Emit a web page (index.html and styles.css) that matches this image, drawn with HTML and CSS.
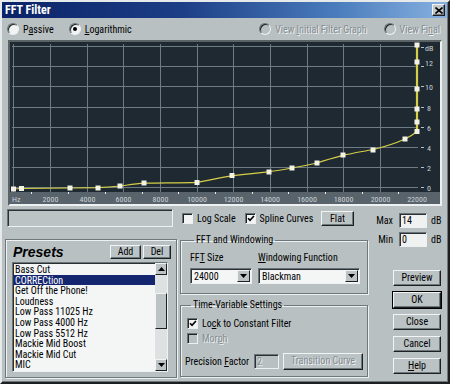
FILE: index.html
```html
<!DOCTYPE html>
<html>
<head>
<meta charset="utf-8">
<link rel="stylesheet" href="styles.css">
</head>
<body>
<div class="win">
  <div class="titlebar">
    <span class="title">FFT Filter</span>
    <span class="close"><svg width="8" height="7" viewBox="0 0 8 7"><path d="M0.5 0.5 L7.5 6.5 M7.5 0.5 L0.5 6.5" stroke="#000" stroke-width="1.6"/></svg></span>
  </div>

  <div class="radios">
    <label class="opt"><span class="radio"></span><span>P<u>a</u>ssive</span></label>
    <label class="opt opt-log"><span class="radio on"></span><span><u>L</u>ogarithmic</span></label>
    <label class="opt dis opt-init"><span class="radio off"></span><span>View <u>I</u>nitial Filter Graph</span></label>
    <label class="opt dis opt-final"><span class="radio off"></span><span>View Fi<u>n</u>al</span></label>
  </div>

  <div class="graph">
    <svg class="plot" width="430" height="162" viewBox="10 42 430 162">
      <rect x="10" y="42" width="430" height="150" fill="#1f2931"/>
      <rect x="10" y="192" width="430" height="12" fill="#58636b"/>
      <g stroke="#6e7a84" stroke-width="1">
        <path d="M12 46.5H418M12 66.5H418M12 86.5H418M12 107.5H418M12 127.5H418M12 147.5H418M12 167.5H418M12 187.5H418"/>
        <path d="M13.5 44V192M50.5 44V192M87.5 44V192M123.5 44V192M160.5 44V192M197.5 44V192M233.5 44V192M270.5 44V192M307.5 44V192M343.5 44V192M380.5 44V192"/>
        <path d="M421 47.5H424M421 66.5H424M421 86.5H424M421 107.5H424M421 127.5H424M421 147.5H424M421 167.5H424M421 187.5H424" stroke="#b8c0c6"/>
      </g>
      <g fill="#e8ecee">
        <rect x="31" y="192" width="1" height="2"/><rect x="68" y="192" width="1" height="2"/><rect x="105" y="192" width="1" height="2"/><rect x="142" y="192" width="1" height="2"/><rect x="178" y="192" width="1" height="2"/><rect x="215" y="192" width="1" height="2"/><rect x="252" y="192" width="1" height="2"/><rect x="288" y="192" width="1" height="2"/><rect x="325" y="192" width="1" height="2"/><rect x="362" y="192" width="1" height="2"/><rect x="398" y="192" width="1" height="2"/>
      </g>
      <path d="M13.5 189 L21.5 188.5 C45 188.3 60 188.1 70 188 L98 187.6 C108 187 114 186.5 120 186 C128 185 136 183.8 144 183.2 C165 182.8 185 182.8 197 182.3 C210 180 221 177.5 232 175.8 C245 174 257 173 269 171.8 C277 170.5 285 169.3 292 168 C300 166.5 309 164.8 317 163 C326 160 335 157.5 343 155.4 C353 153 363 151.5 373 149.5 C384 147 395 143.5 405 139 C410 136.5 414 134 417 131.5" fill="none" stroke="#d6cf46" stroke-width="1.2"/>
      <path d="M417 132V45" stroke="#d6cf46" stroke-width="2.2"/>
      <g fill="#f2f2e6">
        <rect x="11" y="186.5" width="5" height="5"/>
        <rect x="19" y="186" width="5" height="5"/>
        <rect x="67.5" y="185.5" width="5" height="5"/>
        <rect x="95.5" y="185.5" width="5" height="5"/>
        <rect x="117.5" y="183.5" width="5" height="5"/>
        <rect x="141.5" y="180.5" width="5" height="5"/>
        <rect x="194.5" y="180" width="5" height="5"/>
        <rect x="229.5" y="173" width="5" height="5"/>
        <rect x="266.5" y="169.5" width="5" height="5"/>
        <rect x="289.5" y="165.5" width="5" height="5"/>
        <rect x="314.5" y="160.5" width="5" height="5"/>
        <rect x="340.5" y="152.5" width="5" height="5"/>
        <rect x="370.5" y="147.5" width="5" height="5"/>
        <rect x="402.5" y="136.5" width="5" height="5"/>
        <rect x="414.5" y="129" width="5" height="5"/>
        <rect x="414.5" y="119.5" width="5" height="5"/>
        <rect x="414.5" y="106.5" width="5" height="5"/>
        <rect x="414.5" y="86.5" width="5" height="5"/>
        <rect x="414.5" y="59.5" width="5" height="5"/>
        <rect x="414.5" y="42.5" width="5" height="5"/>
      </g>
      <g class="ax" fill="#c9d1d7">
        <text x="12" y="201.5">Hz</text>
        <g text-anchor="middle">
          <text x="50.5" y="201.5">2000</text>
          <text x="87.5" y="201.5">4000</text>
          <text x="123.5" y="201.5">6000</text>
          <text x="160.5" y="201.5">8000</text>
          <text x="197" y="201.5">10000</text>
          <text x="233.5" y="201.5">12000</text>
          <text x="270" y="201.5">14000</text>
          <text x="307" y="201.5">16000</text>
          <text x="343.5" y="201.5">18000</text>
          <text x="380.5" y="201.5">20000</text>
          <text x="417" y="201.5">22000</text>
        </g>
        <text x="425" y="50.5">dB</text>
        <text x="425" y="65.5">12</text>
        <text x="425" y="89.5">10</text>
        <text x="427" y="110.5">8</text>
        <text x="427" y="130.5">6</text>
        <text x="427" y="150.5">4</text>
        <text x="427" y="170.5">2</text>
        <text x="427" y="190.5">0</text>
      </g>
    </svg>
  </div>

  <div class="lower">
    <div class="col1">
      <div class="status"></div>
      <div class="presets">
        <div class="presets-head">
          <span class="presets-title">Presets</span>
          <button class="btn btn-add">Add</button>
          <button class="btn btn-del">Del</button>
        </div>
        <div class="listbox">
          <ul class="items">
            <li>Bass Cut</li>
            <li class="sel">CORRECtion</li>
            <li>Get Off the Phone!</li>
            <li>Loudness</li>
            <li>Low Pass 11025 Hz</li>
            <li>Low Pass 4000 Hz</li>
            <li>Low Pass 5512 Hz</li>
            <li>Mackie Mid Boost</li>
            <li>Mackie Mid Cut</li>
            <li>MIC</li>
            <li>Noise Reduction</li>
          </ul>
          <div class="vscroll">
            <span class="sbtn"><svg width="7" height="4" viewBox="0 0 7 4"><path d="M0 4L3.5 0L7 4Z" fill="#000"/></svg></span>
            <span class="track"><span class="thumb"></span></span>
            <span class="sbtn"><svg width="7" height="4" viewBox="0 0 7 4"><path d="M0 0L3.5 4L7 0Z" fill="#000"/></svg></span>
          </div>
        </div>
      </div>
    </div>

    <div class="col2">
      <div class="checks">
        <label class="ck"><span class="box"></span><span>Log Scale</span></label>
        <label class="ck ck-spline"><span class="box"><svg width="9" height="9" viewBox="0 0 9 9"><path d="M1.2 4.2L3.4 6.6L7.8 1.6" fill="none" stroke="#000" stroke-width="1.8"/></svg></span><span>Spline Curves</span></label>
        <button class="btn btn-flat">Flat</button>
      </div>

      <fieldset class="group fft">
        <legend>FFT and Windowing</legend>
        <div class="fft-grid">
          <span class="lbl">FF<u>T</u> Size</span>
          <span class="lbl"><u>W</u>indowing Function</span>
          <div class="select"><span class="val">24000</span><span class="drop"><svg width="7" height="4" viewBox="0 0 7 4"><path d="M0 0L3.5 4L7 0Z" fill="#000"/></svg></span></div>
          <div class="select"><span class="val">Blackman</span><span class="drop"><svg width="7" height="4" viewBox="0 0 7 4"><path d="M0 0L3.5 4L7 0Z" fill="#000"/></svg></span></div>
        </div>
      </fieldset>

      <fieldset class="group tv">
        <legend>Time-Variable Settings</legend>
        <label class="ck ck-row"><span class="box"><svg width="9" height="9" viewBox="0 0 9 9"><path d="M1.2 4.2L3.4 6.6L7.8 1.6" fill="none" stroke="#000" stroke-width="1.8"/></svg></span><span>Lo<u>c</u>k to Constant Filter</span></label>
        <label class="ck ck-row dis"><span class="box off"></span><span>Mor<u>p</u>h</span></label>
        <div class="prec">
          <span class="lbl">Precision <u>F</u>actor</span>
          <span class="field off">2</span>
          <button class="btn btn-trans dis">Transition Curve</button>
        </div>
      </fieldset>
    </div>

    <div class="col3">
      <div class="range"><span class="rl">Max</span><span class="field">14</span><span class="unit">dB</span></div>
      <div class="range"><span class="rl">Min</span><span class="field">0</span><span class="unit">dB</span></div>
      <div class="actions">
        <button class="btn act">Preview</button>
        <button class="btn act def">OK</button>
        <button class="btn act">Close</button>
        <button class="btn act">Cancel</button>
        <button class="btn act"><u>H</u>elp</button>
      </div>
    </div>
  </div>
</div>
</body>
</html>
```

FILE: styles.css
```css
* { box-sizing: border-box; }
html, body { margin: 0; padding: 0; }
body {
  width: 450px;
  height: 384px;
  overflow: hidden;
  font-family: "Roboto Condensed", "DejaVu Sans Condensed", "Liberation Sans Narrow", "Arial Narrow", "Liberation Sans", sans-serif;
  font-stretch: condensed;
  font-size: 10px;
  color: #000;
  background: #b9c0c2;
}
u { text-decoration: underline; text-underline-offset: 1px; }

.win {
  width: 450px;
  height: 384px;
  background: #b9c0c2;
  border: 2px solid;
  border-color: #e6eaeb #1c2023 #1c2023 #e6eaeb;
  box-shadow: inset -1px -1px 0 #6e777b;
  display: flex;
  flex-direction: column;
}

.titlebar {
  height: 16px;
  margin: 0 1px 0 0;
  background: linear-gradient(90deg, #0b2266 0%, #1c3e86 40%, #4a7cbc 75%, #86b0e0 100%);
  display: flex;
  align-items: center;
  justify-content: space-between;
  padding: 0 2px 0 3px;
}
.title {
  color: #fff;
  font-weight: bold;
  font-size: 12px;
}
.close {
  width: 13px;
  height: 12px;
  background: #c4cacc;
  border: 1px solid;
  border-color: #f2f4f4 #1c2023 #1c2023 #f2f4f4;
  box-shadow: inset -1px -1px 0 #6e777b;
  display: flex;
  align-items: center;
  justify-content: center;
}

.radios {
  height: 22px;
  display: flex;
  align-items: center;
  padding-left: 5px;
  white-space: nowrap;
}
.opt { display: flex; align-items: center; gap: 4px; }
.opt-log { margin-left: 15px; }
.opt-init { margin-left: auto; }
.opt-final { margin-left: 17px; margin-right: 8px; }
.radio {
  width: 12px;
  height: 12px;
  border-radius: 50%;
  background: #f2f4f4;
  border: 1px solid;
  border-color: #6a7377 #eef1f1 #eef1f1 #6a7377;
  box-shadow: inset 1px 1px 0 #1e2326;
  display: flex;
  align-items: center;
  justify-content: center;
  flex: none;
}
.radio.on::after {
  content: "";
  width: 4px;
  height: 4px;
  border-radius: 50%;
  background: #000;
}
.radio.off { background: #b9c0c2; }
.dis { color: #858d91; text-shadow: 1px 1px 0 #eef2f2; }

.graph {
  margin-left: 6px;
  width: 434px;
  height: 166px;
  border: 2px solid;
  border-color: #5a6266 #eef1f1 #eef1f1 #5a6266;
  box-shadow: inset 1px 1px 0 #1a1e20;
}
.plot { display: block; }
.ax text { font-size: 8px; }

.lower {
  flex: 1;
  display: grid;
  grid-template-columns: 173px 188px 1fr;
  padding-left: 3px;
  gap: 0 2px;
}

/* column 1 */
.col1 { display: flex; flex-direction: column; }
.status {
  margin: 3px 0 0 2px;
  width: 166px;
  height: 18px;
  border: 1px solid;
  border-color: #6a7377 #eef1f1 #eef1f1 #6a7377;
  box-shadow: inset 1px 1px 0 #2a3033;
  background: #bcc3c5;
}
.presets {
  margin-top: 12px;
  width: 172px;
  height: 139px;
  border: 1px solid #6e777b;
  box-shadow: inset 1px 1px 0 #eef1f1, 1px 1px 0 #eef1f1;
  padding: 4px 0 0 6px;
}
.presets-head { display: flex; align-items: center; height: 16px; }
.presets-title {
  font-family: "Liberation Sans", Arial, sans-serif;
  font-stretch: normal;
  font-weight: bold;
  font-style: italic;
  font-size: 14px;
  margin-left: 1px;
}
.btn {
  font-family: inherit;
  font-stretch: inherit;
  font-size: 10px;
  color: #000;
  background: #bcc3c5;
  border: 1px solid;
  border-color: #f2f4f4 #1c2023 #1c2023 #f2f4f4;
  box-shadow: inset -1px -1px 0 #6e777b;
  padding: 0;
  display: flex;
  align-items: center;
  justify-content: center;
  line-height: 1;
  white-space: nowrap;
}
.btn.dis { color: #858d91; text-shadow: 1px 1px 0 #eef2f2; }
.btn-add { margin-left: auto; width: 31px; height: 14px; }
.btn-del { margin-left: 2px; margin-right: 5px; width: 28px; height: 14px; }

.listbox {
  margin-top: 2px;
  width: 156px;
  height: 110px;
  display: flex;
  background: #f4f6f6;
  border: 1px solid;
  border-color: #6a7377 #eef1f1 #eef1f1 #6a7377;
  box-shadow: inset 1px 1px 0 #2a3033;
  overflow: hidden;
}
.items {
  list-style: none;
  margin: 0;
  padding: 1px 0 0 1px;
  flex: 1;
  overflow: hidden;
}
.items li {
  height: 10.6px;
  line-height: 11px;
  padding-left: 1px;
  white-space: nowrap;
}
.items li.sel { background: #142670; color: #fff; }
.vscroll {
  width: 12px;
  display: flex;
  flex-direction: column;
}
.sbtn {
  height: 12px;
  background: #bcc3c5;
  border: 1px solid;
  border-color: #f2f4f4 #1c2023 #1c2023 #f2f4f4;
  display: flex;
  align-items: center;
  justify-content: center;
}
.track {
  flex: 1;
  background: #dde1e2;
  padding-top: 18px;
}
.thumb {
  display: block;
  height: 36px;
  background: #bcc3c5;
  border: 1px solid;
  border-color: #f2f4f4 #1c2023 #1c2023 #f2f4f4;
}

/* column 2 */
.col2 { display: flex; flex-direction: column; }
.checks {
  margin-top: 5px;
  height: 15px;
  display: flex;
  align-items: center;
  padding-left: 2px;
  white-space: nowrap;
}
.ck { display: flex; align-items: center; gap: 4px; white-space: nowrap; }
.ck-spline { margin-left: 9px; }
.box {
  width: 11px;
  height: 11px;
  background: #f2f4f4;
  border: 1px solid;
  border-color: #6a7377 #eef1f1 #eef1f1 #6a7377;
  box-shadow: inset 1px 1px 0 #1e2326;
  display: flex;
  align-items: center;
  justify-content: center;
  flex: none;
}
.box svg { margin: 0 0 0 1px; }
.box.off { background: #b9c0c2; }
.btn-flat { margin-left: auto; margin-right: 14px; width: 33px; height: 15px; }

.group {
  margin: 0;
  width: 188px;
  border: 1px solid #6e777b;
  box-shadow: inset 1px 1px 0 #eef1f1, 1px 1px 0 #eef1f1;
  padding: 0;
  min-width: 0;
}
.group legend {
  padding: 0 2px;
  margin-left: 4px;
  line-height: 12px;
  height: 12px;
  white-space: nowrap;
}
.fft { margin-top: 8px; height: 60px; padding: 6px 0 0 9px; }
.fft-grid {
  display: grid;
  grid-template-columns: 62px 102px;
  grid-template-rows: 12px 16px;
  column-gap: 6px;
  row-gap: 4px;
  white-space: nowrap;
}
.fft-grid .lbl { line-height: 12px; }
.select {
  display: flex;
  background: #f4f6f6;
  border: 1px solid;
  border-color: #6a7377 #eef1f1 #eef1f1 #6a7377;
  box-shadow: inset 1px 1px 0 #2a3033;
  padding: 1px 1px 1px 2px;
}
.select .val { flex: 1; line-height: 13px; padding-left: 1px; }
.drop {
  width: 13px;
  background: #bcc3c5;
  border: 1px solid;
  border-color: #f2f4f4 #1c2023 #1c2023 #f2f4f4;
  display: flex;
  align-items: center;
  justify-content: center;
}

.tv { margin-top: 5px; height: 78px; padding: 5px 0 0 6px; }
.ck-row { height: 15px; }
.prec {
  margin-top: 6px;
  display: flex;
  align-items: center;
  margin-left: -2px;
  height: 18px;
  white-space: nowrap;
}
.prec .lbl { width: 61px; }
.field {
  display: block;
  background: #f0f2f2;
  border: 1px solid;
  border-color: #6a7377 #eef1f1 #eef1f1 #6a7377;
  box-shadow: inset 1px 1px 0 #2a3033;
  line-height: 13px;
  padding-left: 2px;
  flex: none;
}
.prec .field { margin-left: 8px; width: 25px; height: 15px; }
.field.off { background: #b9c0c2; color: #858d91; text-shadow: 1px 1px 0 #eef2f2; }
.btn-trans { margin-left: 4px; width: 80px; height: 17px; flex: none; }

/* column 3 */
.col3 { display: flex; flex-direction: column; white-space: nowrap; }
.range { display: flex; align-items: center; height: 15px; margin-top: 4px; }
.range:first-child { margin-top: 7px; }
.rl { width: 23px; text-align: right; }
.range .field { margin-left: 6px; width: 28px; height: 15px; }
.unit { margin-left: 4px; }
.actions {
  margin-top: 23px;
  margin-left: 23px;
  display: flex;
  flex-direction: column;
  gap: 6px;
}
.act { width: 48px; height: 16px; }
.act.def { outline: 1px solid #000; }
```
